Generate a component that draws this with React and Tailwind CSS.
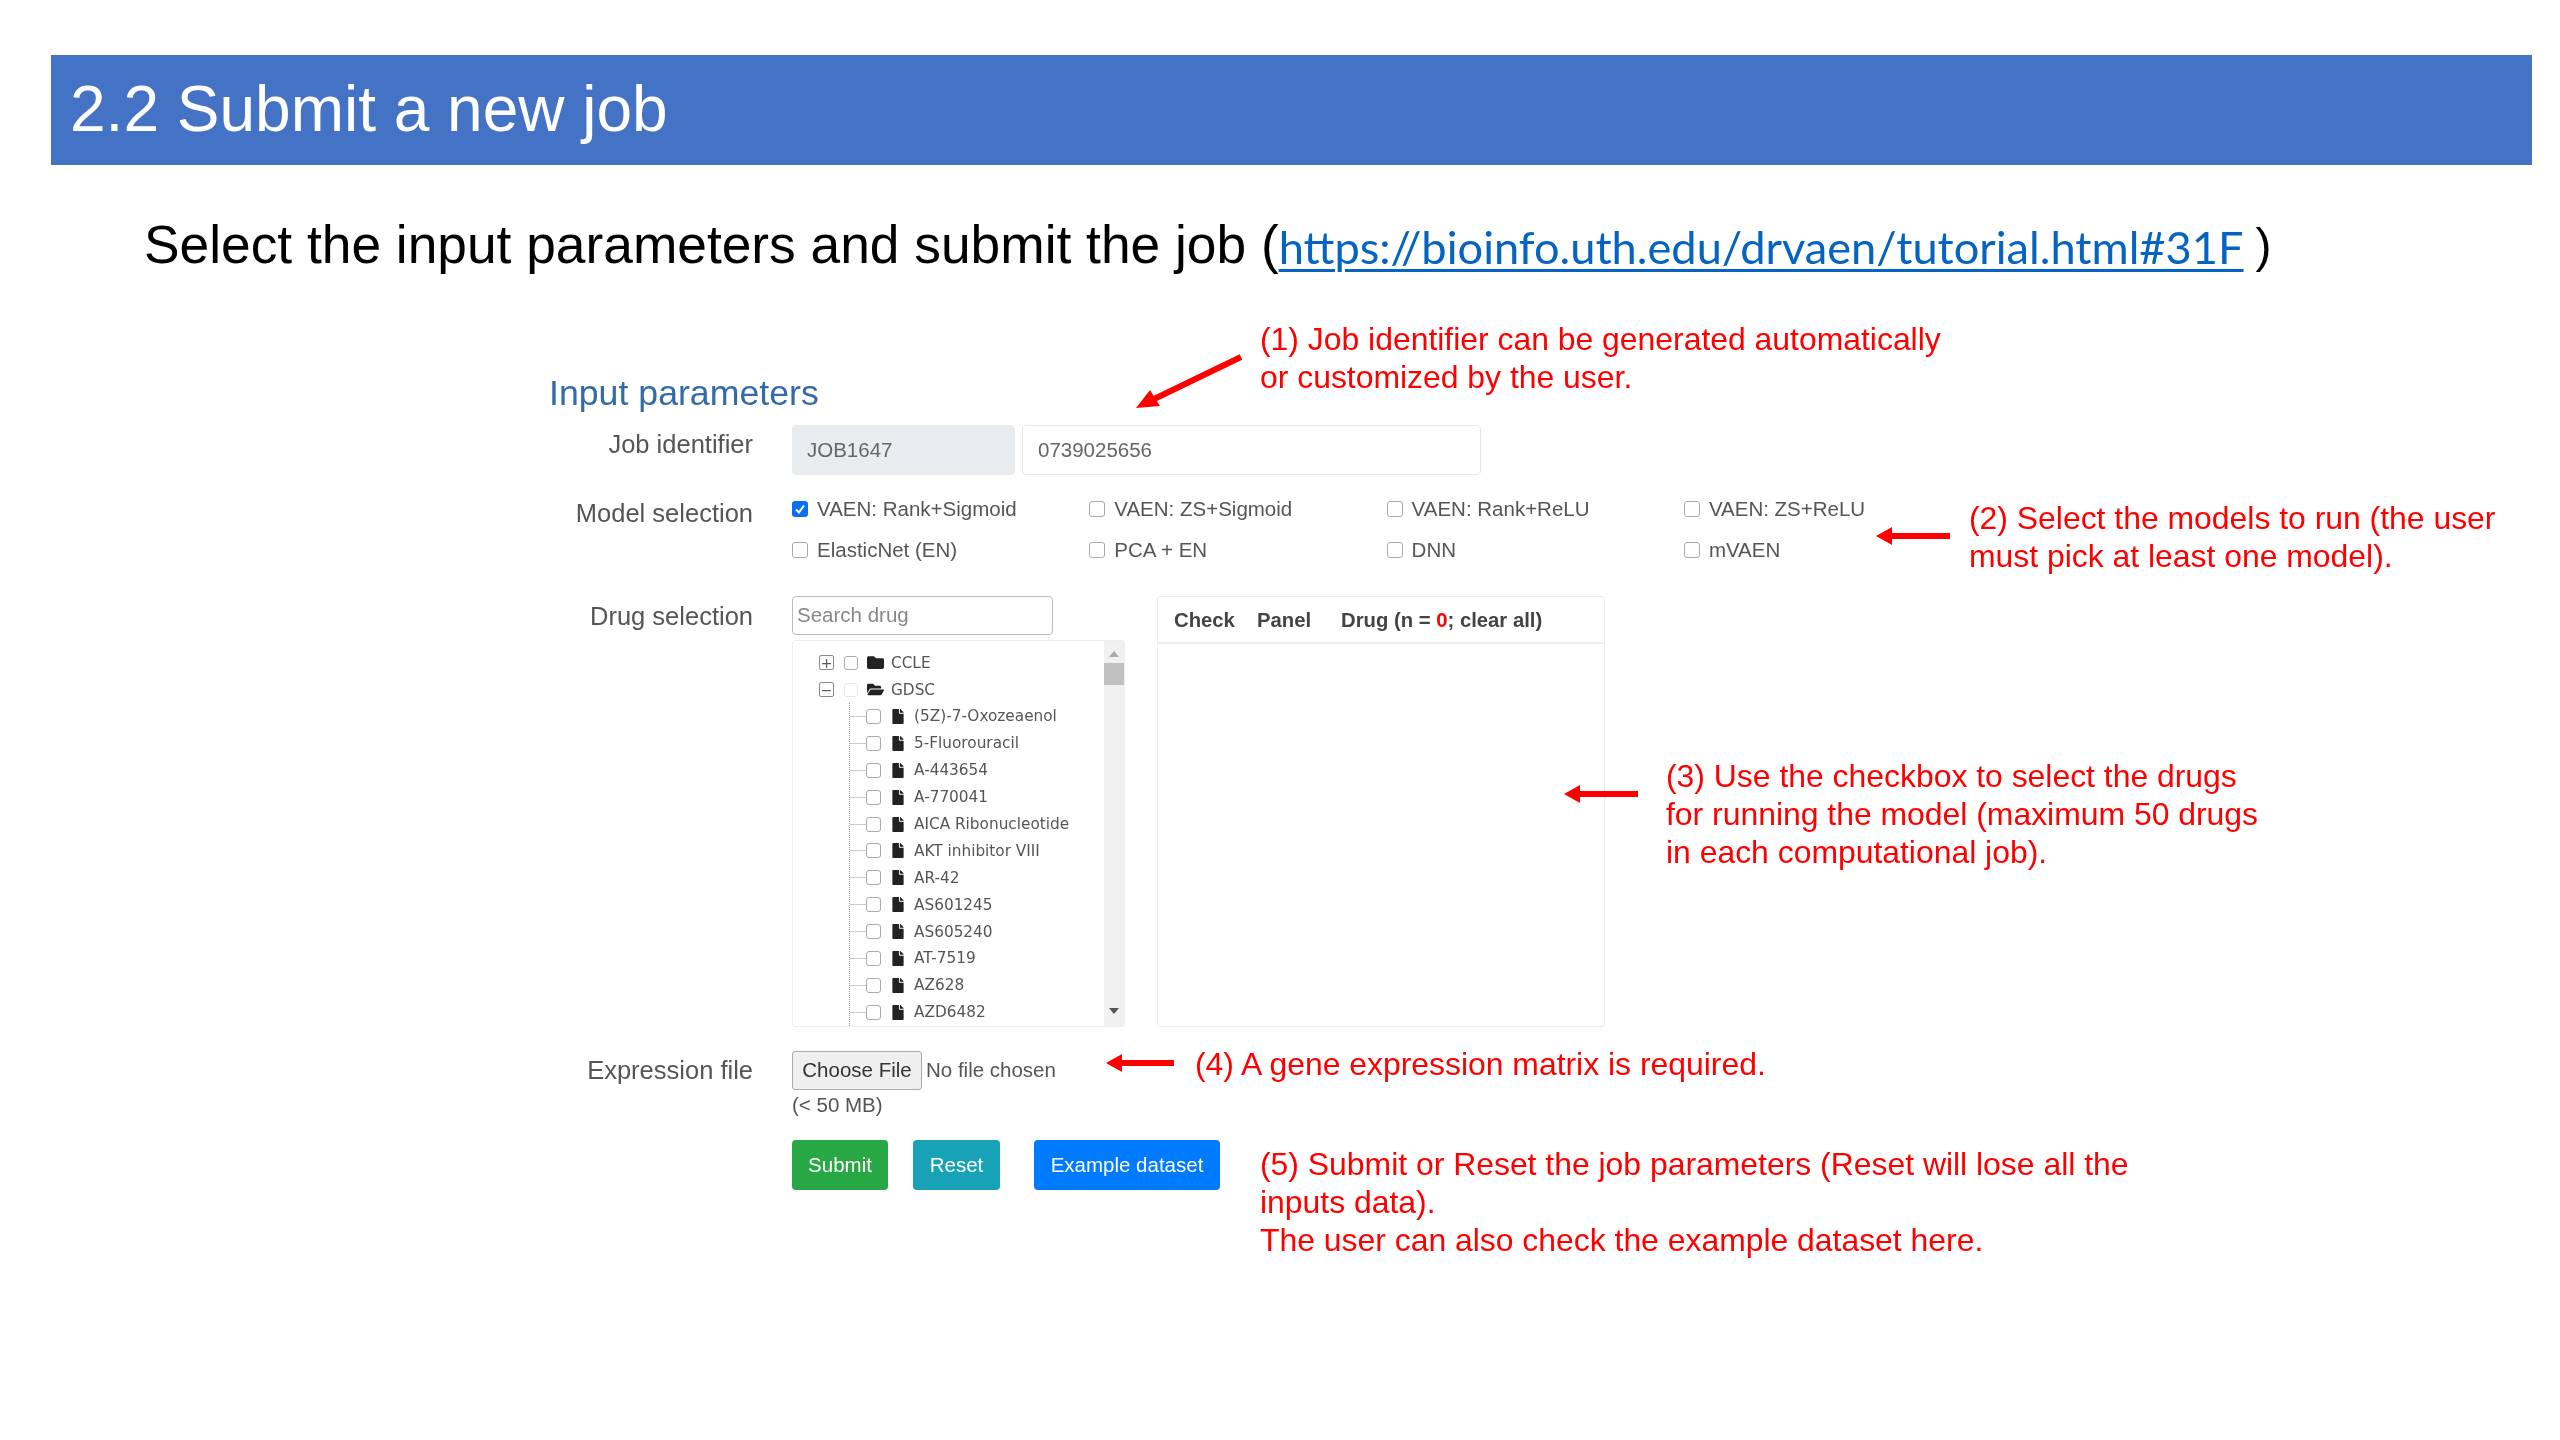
import React from "react";
import { FaFolder, FaFolderOpen, FaFile } from "react-icons/fa";

const drugs = ["(5Z)-7-Oxozeaenol","5-Fluorouracil","A-443654","A-770041","AICA Ribonucleotide","AKT inhibitor VIII","AR-42","AS601245","AS605240","AT-7519","AZ628","AZD6482"];
const models = ["VAEN: Rank+Sigmoid","VAEN: ZS+Sigmoid","VAEN: Rank+ReLU","VAEN: ZS+ReLU","ElasticNet (EN)","PCA + EN","DNN","mVAEN"];

function Label({ children, className = "" }) {
  return <div className={`w-[204px] shrink-0 text-right text-[25.5px] leading-[32px] text-[#555] ${className}`}>{children}</div>;
}

function Box({ className = "" }) {
  return <span className={`inline-block shrink-0 rounded-[3px] border border-[#aaa] bg-white ${className}`} />;
}

function Arrow({ className, x1, y1, x2, y2, w, h, head }) {
  return (
    <svg className={`absolute ${className}`} width={w} height={h} viewBox={`0 0 ${w} ${h}`}>
      <line x1={x1} y1={y1} x2={x2} y2={y2} stroke="#ff0000" strokeWidth="6" />
      <polygon points={head} fill="#ff0000" />
    </svg>
  );
}

function Note({ className, children }) {
  return <div className={`absolute whitespace-nowrap text-[31.9px] leading-[38px] text-[#ff0000] ${className}`}>{children}</div>;
}

export default function App() {
  return (
    <div className="relative h-[1440px] w-[2560px] overflow-hidden bg-white pt-[55px] font-['Liberation_Sans',Arial,sans-serif] blur-[0.6px]">
      <div className="ml-[51px] flex h-[110px] w-[2481px] items-center bg-[#4472c4] pb-[2px] pl-[19px] text-[64px] text-white">2.2 Submit a new job</div>

      <div className="mt-[45px] ml-[144px] flex h-[70px] items-center whitespace-nowrap text-[53.3px] text-black">
        <span>Select the input parameters and submit the job (</span>
        <a className="pt-[3px] font-['Lato',sans-serif] text-[45.2px] text-[#0563c1] underline decoration-[3px] underline-offset-[5px]">https://bioinfo.uth.edu/drvaen/tutorial.html#31F</a>
        <span className="ml-[12px] pt-[2px] text-[48px]">)</span>
      </div>

      <div className="mt-[93px] ml-[549px]">
        <div className="h-[40px] text-[35.7px] leading-[40px] text-[#336ba8]">Input parameters</div>

        <div className="mt-[12px] flex gap-[39px]">
          <Label className="pt-[3px]">Job identifier</Label>
          <div className="flex gap-[7px] text-[20.5px] text-[#666]">
            <div className="flex h-[50px] w-[223px] items-center rounded-[4px] bg-[#e9ecef] pl-[15px]">JOB1647</div>
            <div className="flex h-[50px] w-[459px] items-center rounded-[4px] border border-[#e6e6e6] pl-[15px]">0739025656</div>
          </div>
        </div>

        <div className="mt-[22px] flex gap-[39px]">
          <Label>Model selection</Label>
          <div className="grid grid-cols-[297.3px_297.3px_297.3px_297.3px] gap-y-[17px] text-[20.5px] leading-[24px] text-[#555]">
            {models.map((m, i) => (
              <div key={m} className="flex h-[24px] items-center gap-[9px]">
                {i === 0 ? (
                  <span className="flex h-[16px] w-[16px] shrink-0 items-center justify-center rounded-[3px] bg-[#0b6fef]">
                    <svg width="12" height="12" viewBox="0 0 12 12"><path d="M2 6.5 L5 9.5 L10 2.5" fill="none" stroke="#fff" strokeWidth="2" /></svg>
                  </span>
                ) : (
                  <Box className="h-[16px] w-[16px]" />
                )}
                <span>{m}</span>
              </div>
            ))}
          </div>
        </div>

        <div className="mt-[34px] flex gap-[39px]">
          <Label className="pt-[4px]">Drug selection</Label>
          <div className="flex gap-[32px]">
            <div className="w-[333px]">
              <div className="flex h-[39px] w-[261px] items-center rounded-[4px] border border-[#bbb] pl-[4px] text-[20.5px] text-[#888]">Search drug</div>
              <div className="mt-[5px] flex h-[387px] overflow-hidden rounded-[3px] border border-[#eeeeee]">
                <div className="flex-1 overflow-hidden pt-[8px] font-['DejaVu_Sans',sans-serif] text-[15.3px] text-[#555]">
                  <div className="flex h-[27px] items-center pl-[26px]">
                    <span className="flex h-[15px] w-[15px] shrink-0 items-center justify-center rounded-[2px] border border-[#888] text-[14px] leading-none">+</span>
                    <Box className="ml-[10px] h-[14px] w-[14px]" />
                    <FaFolder className="ml-[9px] h-[17px] w-[17px] shrink-0 text-[#222]" />
                    <span className="ml-[7px] pt-[1px]">CCLE</span>
                  </div>
                  <div className="flex h-[27px] items-center pl-[26px]">
                    <span className="flex h-[15px] w-[15px] shrink-0 items-center justify-center rounded-[2px] border border-[#888] text-[14px] leading-none">−</span>
                    <Box className="ml-[10px] h-[14px] w-[14px] border-[#e8e8e8]" />
                    <FaFolderOpen className="ml-[9px] h-[17px] w-[17px] shrink-0 text-[#222]" />
                    <span className="ml-[7px] pt-[1px]">GDSC</span>
                  </div>
                  <div className="ml-[56px] border-l border-dotted border-[#999]">
                    {drugs.map((d) => (
                      <div key={d} className="flex h-[26.9px] items-center whitespace-nowrap">
                        <span className="h-0 w-[16px] shrink-0 border-t border-[#ccc]" />
                        <Box className="h-[15px] w-[15px] border-[#999]" />
                        <FaFile className="ml-[10px] h-[15px] w-[14px] shrink-0 text-[#222]" />
                        <span className="ml-[9px] pt-[1px]">{d}</span>
                      </div>
                    ))}
                  </div>
                </div>
                <div className="flex w-[20px] shrink-0 flex-col items-center bg-[#f1f1f1]">
                  <svg className="mt-[10px]" width="10" height="6" viewBox="0 0 10 6"><polygon points="5,0 10,6 0,6" fill="#aaa" /></svg>
                  <div className="mt-[6px] h-[22px] w-full bg-[#c1c1c1]" />
                  <svg className="mt-auto mb-[12px]" width="10" height="6" viewBox="0 0 10 6"><polygon points="0,0 10,0 5,6" fill="#555" /></svg>
                </div>
              </div>
            </div>

            <div className="h-[431px] w-[448px] rounded-[3px] border border-[#eeeeee]">
              <div className="flex h-[47px] items-center border-b-2 border-[#eeeeee] pt-[2px] pl-[16px] text-[20.3px] font-bold text-[#444]">
                <span className="w-[83px]">Check</span>
                <span className="w-[84px]">Panel</span>
                <span>Drug (n = <span className="text-[#ff0000]">0</span>; clear all)</span>
              </div>
            </div>
          </div>
        </div>

        <div className="mt-[24px] flex gap-[39px]">
          <Label className="pt-[3px]">Expression file</Label>
          <div className="flex h-[39px] items-center text-[20.5px] text-[#555]">
            <span className="flex h-[39px] w-[130px] items-center justify-center rounded-[3px] border border-[#aaa] bg-[#efefef] text-[#333]">Choose File</span>
            <span className="ml-[4px]">No file chosen</span>
          </div>
        </div>
        <div className="mt-[3px] ml-[243px] h-[24px] text-[20.5px] leading-[24px] text-[#555]">(&lt; 50 MB)</div>

        <div className="mt-[23px] ml-[243px] flex text-[20.5px] text-white">
          <span className="flex h-[50px] w-[96px] items-center justify-center rounded-[4px] bg-[#28a745]">Submit</span>
          <span className="ml-[25px] flex h-[50px] w-[87px] items-center justify-center rounded-[4px] bg-[#17a2b8]">Reset</span>
          <span className="ml-[34px] flex h-[50px] w-[186px] items-center justify-center rounded-[4px] bg-[#007bff]">Example dataset</span>
        </div>
      </div>

      <Arrow className="left-[1136px] top-[354px]" w={108} h={56} x1={105} y1={3} x2={16} y2={46} head="0,54 14,36 24,52" />
      <Note className="left-[1260px] top-[320px]">(1) Job identifier can be generated automatically<br />or customized by the user.</Note>

      <Arrow className="left-[1876px] top-[526px]" w={76} h={20} x1={74} y1={10} x2={14} y2={10} head="0,10 16,1 16,19" />
      <Note className="left-[1969px] top-[499px]">(2) Select the models to run (the user<br />must pick at least one model).</Note>

      <Arrow className="left-[1564px] top-[784px]" w={76} h={20} x1={74} y1={10} x2={14} y2={10} head="0,10 16,1 16,19" />
      <Note className="left-[1666px] top-[757px]">(3) Use the checkbox to select the drugs<br />for running the model (maximum 50 drugs<br />in each computational job).</Note>

      <Arrow className="left-[1106px] top-[1053px]" w={70} h={20} x1={68} y1={10} x2={14} y2={10} head="0,10 16,1 16,19" />
      <Note className="left-[1195px] top-[1045px]">(4) A gene expression matrix is required.</Note>

      <Note className="left-[1260px] top-[1145px]">(5) Submit or Reset the job parameters (Reset will lose all the<br />inputs data).<br />The user can also check the example dataset here.</Note>
    </div>
  );
}
